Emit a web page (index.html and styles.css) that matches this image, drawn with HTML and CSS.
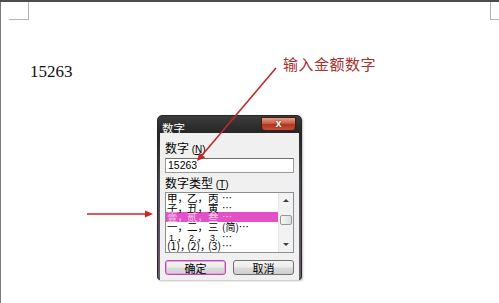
FILE: index.html
```html
<!DOCTYPE html>
<html lang="zh-CN">
<head>
<meta charset="utf-8">
<link rel="stylesheet" href="styles.css">
</head>
<body>
<div class="topbar"></div>
<div class="page">
  <span class="mark mark-tl"></span>
  <span class="mark mark-tr"></span>
  <p class="amount">15263</p>
  <div class="callout">输入金额数字</div>
  <div class="dialog">
    <div class="titlebar">
      <span class="title">数字</span>
      <span class="close">x</span>
    </div>
    <div class="client">
      <div class="label">数字 <span class="acc">(<u>N</u>)</span></div>
      <div class="input">15263</div>
      <div class="label label-2">数字类型 <span class="acc">(<u>T</u>)</span></div>
      <div class="list">
        <div class="items">
          <div class="row"><span class="c1">甲，</span><span class="c2">乙，</span><span class="c3">丙</span><span class="dots">…</span></div>
          <div class="row"><span class="c1">子，</span><span class="c2">丑，</span><span class="c3">寅</span><span class="dots">…</span></div>
          <div class="row sel"><span class="c1">壹，</span><span class="c2">贰，</span><span class="c3">叁</span><span class="dots">…</span></div>
          <div class="row"><span class="c1">一，</span><span class="c2">二，</span><span class="c3">三</span><span class="dots">(简)…</span></div>
          <div class="row"><span class="c1 num">1.，</span><span class="c2 num">2.，</span><span class="c3 num">3.</span><span class="dots">…</span></div>
          <div class="row"><span class="c1">(1)，</span><span class="c2">(2)，</span><span class="c3">(3)</span><span class="dots">…</span></div>
        </div>
        <div class="scroll">
          <span class="sbtn"><span class="tri-up"></span></span>
          <span class="thumb"></span>
          <span class="sbtn sbtn-down"><span class="tri-down"></span></span>
        </div>
      </div>
      <div class="buttons">
        <button class="btn btn-default">确定</button>
        <button class="btn">取消</button>
      </div>
    </div>
  </div>
  <svg class="arrows" width="499" height="301" viewBox="0 0 499 301">
    <line x1="276" y1="66" x2="202.2" y2="152.9" stroke="#c0282a" stroke-width="1.6"/>
    <polygon points="197,159 205.2,155.4 199.3,150.4" fill="#c0282a"/>
    <line x1="87" y1="212" x2="146" y2="212" stroke="#d02424" stroke-width="1.6"/>
    <polygon points="153,212 145,208.5 145,215.5" fill="#d02424"/>
  </svg>
</div>
</body>
</html>
```

FILE: styles.css
```css
html, body {
  margin: 0;
  padding: 0;
  background: #ffffff;
}
body {
  width: 499px;
  height: 303px;
  overflow: hidden;
  font-family: "Noto Sans CJK SC", "Liberation Sans", sans-serif;
}
.topbar {
  height: 2px;
  background: #4b4b4b;
}
.page {
  position: relative;
  height: 301px;
  box-shadow: inset 1px 0 #7a7a7a;
}
.mark {
  position: absolute;
  top: 0;
  height: 17px;
  border-bottom: 1px solid #b4b4b4;
}
.mark-tl {
  left: 9px;
  width: 19px;
  border-right: 1px solid #b4b4b4;
}
.mark-tr {
  left: 490px;
  width: 9px;
  border-left: 1px solid #b4b4b4;
}
.amount {
  margin: 0;
  padding: 60px 0 0 30px;
  font-family: "Liberation Serif", "Times New Roman", serif;
  font-size: 17px;
  line-height: 20px;
  color: #111;
}
.callout {
  position: absolute;
  left: 283px;
  top: 54px;
  font-size: 15px;
  line-height: 15px;
  letter-spacing: 0.5px;
  color: #a8302e;
}
.arrows {
  position: absolute;
  left: 0;
  top: 0;
  z-index: 2;
  pointer-events: none;
}
.dialog {
  position: absolute;
  left: 157px;
  top: 113px;
  width: 145px;
  height: 165px;
  box-sizing: border-box;
  border: 1px solid #262626;
  border-radius: 5px 5px 3px 3px;
  background: linear-gradient(to bottom, #3c3c3c 0, #262626 10%, #4c4850 40%, #6a5c6e 100%);
  display: flex;
  flex-direction: column;
  box-shadow: 1px 1px 2px rgba(0,0,0,0.25);
}
.titlebar {
  height: 17px;
  display: flex;
  align-items: flex-start;
  padding-left: 4px;
}
.title {
  color: #ffffff;
  font-size: 11.5px;
  line-height: 14px;
  padding-top: 5px;
}
.close {
  margin-left: auto;
  margin-right: 5px;
  margin-top: 1px;
  width: 35px;
  height: 14px;
  box-sizing: border-box;
  border: 1px solid #4a1810;
  border-radius: 0 0 4px 4px;
  background: linear-gradient(to bottom, #e0a08e 0, #cc5a44 45%, #b23420 55%, #c4503a 100%);
  color: #fff;
  font-family: "Liberation Sans", sans-serif;
  font-weight: bold;
  font-size: 11px;
  line-height: 11px;
  text-align: center;
  text-shadow: 0 0 2px #5a1000;
}
.client {
  flex: 1;
  margin: 0 2px 2px 2px;
  background: #f0f0f0;
  padding: 8px 5px 5px 5px;
  display: flex;
  flex-direction: column;
}
.label {
  font-size: 12px;
  line-height: 14px;
  color: #000;
}
.label-2 {
  margin-top: 3px;
}
.acc {
  font-family: "Liberation Sans", sans-serif;
  font-size: 10px;
}
.input {
  margin-top: 1px;
  height: 15px;
  box-sizing: border-box;
  border: 1px solid #9a9a9a;
  border-top-color: #6e6e6e;
  background: #fff;
  font-family: "Liberation Sans", sans-serif;
  font-size: 10.5px;
  line-height: 13px;
  padding-left: 2px;
  color: #000;
}
.list {
  height: 61px;
  box-sizing: border-box;
  border: 1px solid #8a8e96;
  background: #fff;
  display: flex;
}
.items {
  flex: 1;
  overflow: hidden;
}
.row {
  height: 9.7px;
  line-height: 9.7px;
  font-size: 10.5px;
  white-space: nowrap;
  padding-left: 1px;
  color: #000;
}
.row span {
  display: inline-block;
}
.c1 { width: 20px; }
.c2 { width: 21px; }
.c3 { width: 14px; }
.num { font-family: "Liberation Sans", sans-serif; font-size: 9px; padding-left: 2px; box-sizing: border-box; }
.dots { font-size: 10px; }
.sel {
  background: #e451c6;
  color: #f7c9ee;
}
.scroll {
  width: 15px;
  background: #f2f2f2;
  border-left: 1px solid #e6e6e6;
  box-sizing: border-box;
  display: flex;
  flex-direction: column;
  align-items: center;
}
.sbtn {
  height: 15px;
  width: 100%;
  display: flex;
  align-items: center;
  justify-content: center;
}
.sbtn-down {
  margin-top: auto;
}
.tri-up {
  width: 0;
  height: 0;
  border-left: 3px solid transparent;
  border-right: 3px solid transparent;
  border-bottom: 3px solid #404040;
}
.tri-down {
  width: 0;
  height: 0;
  border-left: 3px solid transparent;
  border-right: 3px solid transparent;
  border-top: 3px solid #404040;
}
.thumb {
  margin-top: 7px;
  width: 12px;
  height: 10px;
  box-sizing: border-box;
  border: 1px solid #979797;
  border-radius: 2px;
  background: linear-gradient(to right, #f6f6f6, #dedede);
}
.buttons {
  margin-top: 7px;
  display: grid;
  grid-template-columns: 1fr 1fr;
  column-gap: 7px;
}
.btn {
  height: 15px;
  margin: 0;
  padding: 0;
  box-sizing: border-box;
  border: 1px solid #707070;
  border-radius: 3px;
  background: linear-gradient(to bottom, #f4f4f4 0, #ececec 48%, #dcdcdc 52%, #cfcfcf 100%);
  font-family: "Noto Sans CJK SC", sans-serif;
  font-size: 11px;
  line-height: 12px;
  color: #000;
}
.btn-default {
  border-color: #b84aa8;
  box-shadow: inset 0 0 0 1px #e8a4df;
}
```
